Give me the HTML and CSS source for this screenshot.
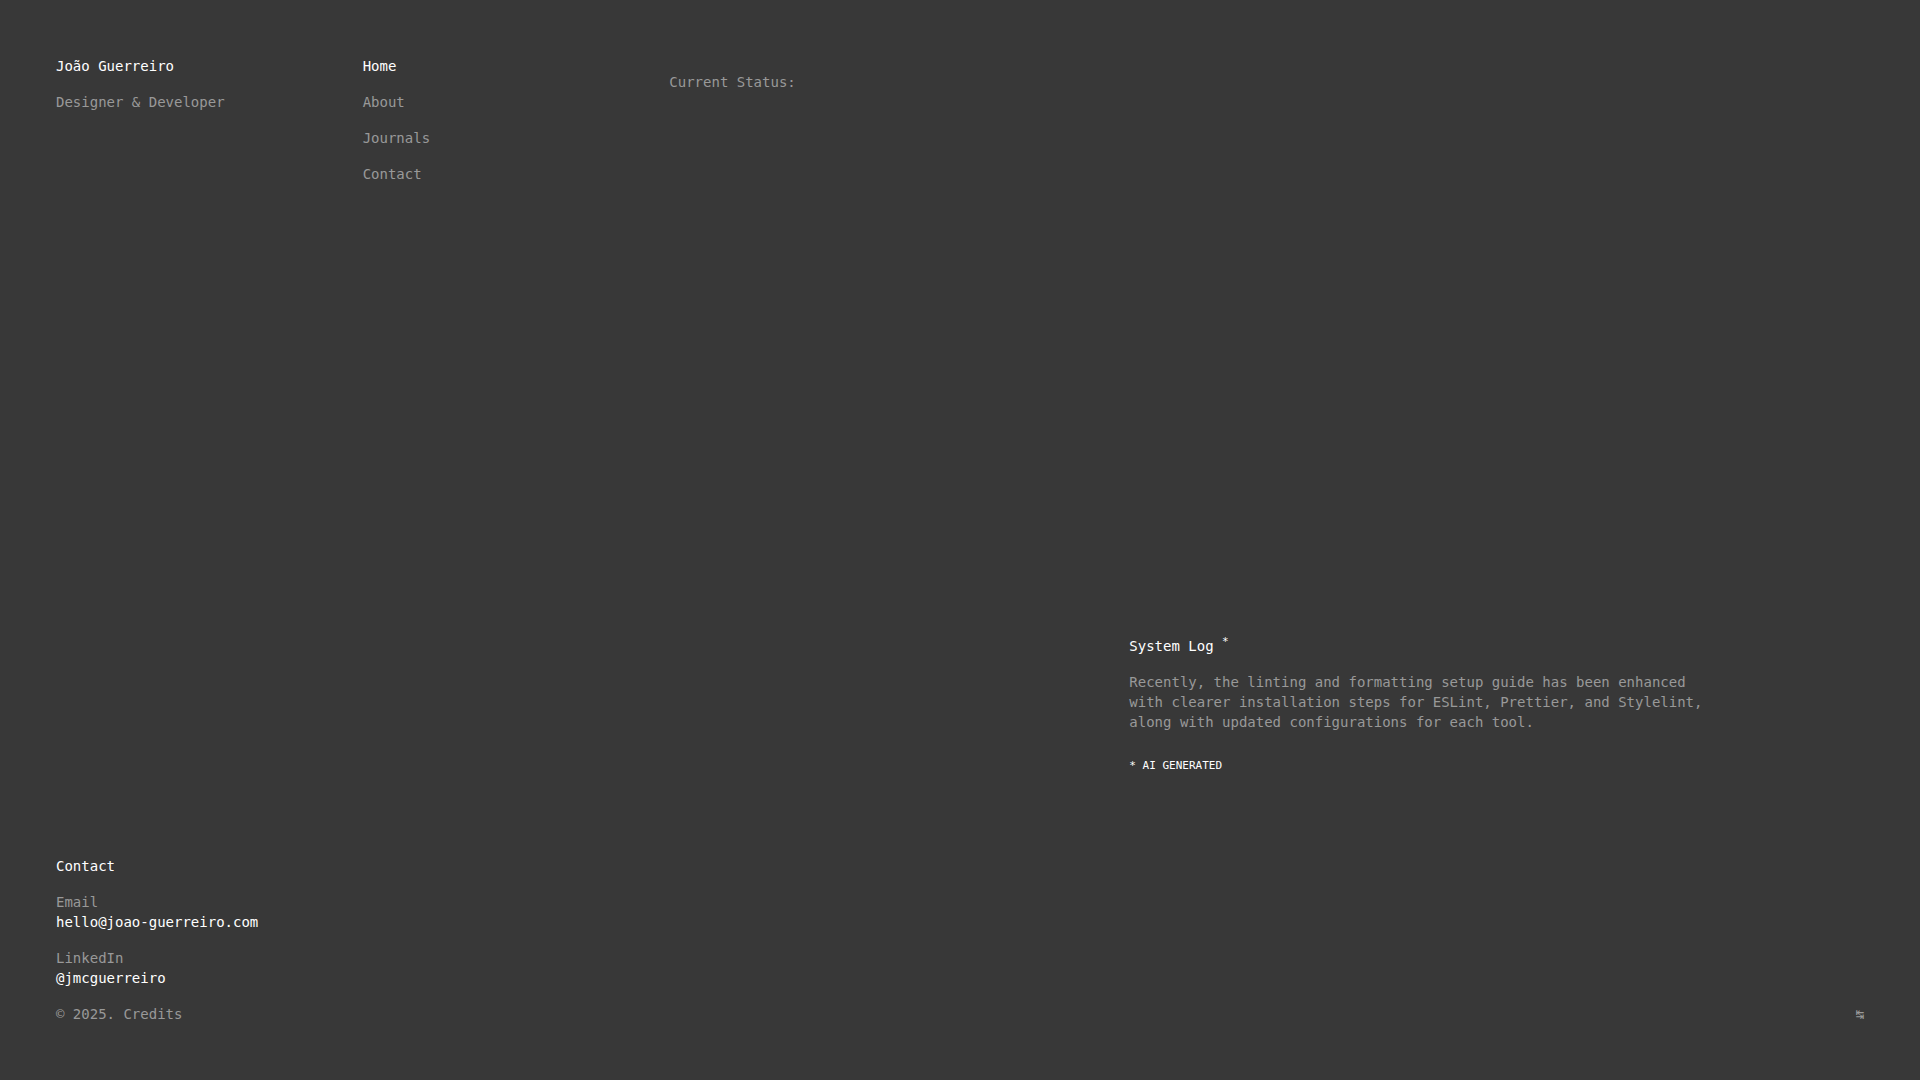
FILE: index.html
```html
<!DOCTYPE html>
<html lang="en">
<head>
<meta charset="utf-8">
<meta name="viewport" content="width=device-width, initial-scale=1">
<title>João Guerreiro</title>
<link rel="stylesheet" href="styles.css">
</head>
<body>
<header class="grid header">
  <div class="intro">
    <h1 class="title">João Guerreiro</h1>
    <p>Designer &amp; Developer</p>
  </div>
  <nav class="nav">
    <a class="active" href="#home">Home</a>
    <a href="#about">About</a>
    <a href="#journals">Journals</a>
    <a href="#contact">Contact</a>
  </nav>
  <p class="status">Current Status:</p>
</header>
<main class="grid main">
  <section class="log">
    <h2 class="title">System Log <sup class="mark">*</sup></h2>
    <p>Recently, the linting and formatting setup guide has been enhanced with clearer installation steps for ESLint, Prettier, and Stylelint, along with updated configurations for each tool.</p>
    <small class="note">* AI GENERATED</small>
  </section>
</main>
<footer class="footer" id="contact">
  <h2 class="title">Contact</h2>
  <p>Email<br><a class="bright" href="mailto:hello@joao-guerreiro.com">hello@joao-guerreiro.com</a></p>
  <p>LinkedIn<br><a class="bright" href="#linkedin">@jmcguerreiro</a></p>
  <div class="bottom">
    <p>© 2025. <a href="#credits">Credits</a></p>
    <button class="toggle" type="button">↹</button>
  </div>
</footer>
</body>
</html>
```

FILE: styles.css
```css
* {
  box-sizing: border-box;
  margin: 0;
}

body {
  display: flex;
  flex-direction: column;
  min-height: 100vh;
  padding: 56px;
  background: #383838;
  color: #999;
  font: 14px/20px "DejaVu Sans Mono", monospace;
}

a {
  color: inherit;
  text-decoration: none;
}

.grid {
  display: grid;
  grid-template-columns: repeat(12, 1fr);
  column-gap: 32px;
}

.title {
  font-size: 14px;
  font-weight: 400;
}

.title,
.active,
.bright,
.note {
  color: #fff;
}

.intro {
  grid-column: 1 / span 2;
}

.nav {
  grid-column: 3 / span 2;
}

.intro,
.nav,
.footer {
  display: flex;
  flex-direction: column;
  align-items: flex-start;
  gap: 16px;
}

.status {
  grid-column: 5 / span 3;
  padding-top: 16px;
}

.main {
  flex: 1;
  align-content: end;
  padding-bottom: 80px;
}

.log {
  display: flex;
  flex-direction: column;
  grid-column: 8 / span 4;
  gap: 16px;
}

.mark {
  font-size: 11px;
  line-height: 0;
}

.note {
  padding-top: 8px;
  font-size: 11px;
}

.bottom {
  display: flex;
  justify-content: space-between;
  align-self: stretch;
}

.toggle {
  padding: 0;
  border: 0;
  background: none;
  color: inherit;
  font: inherit;
}
```
